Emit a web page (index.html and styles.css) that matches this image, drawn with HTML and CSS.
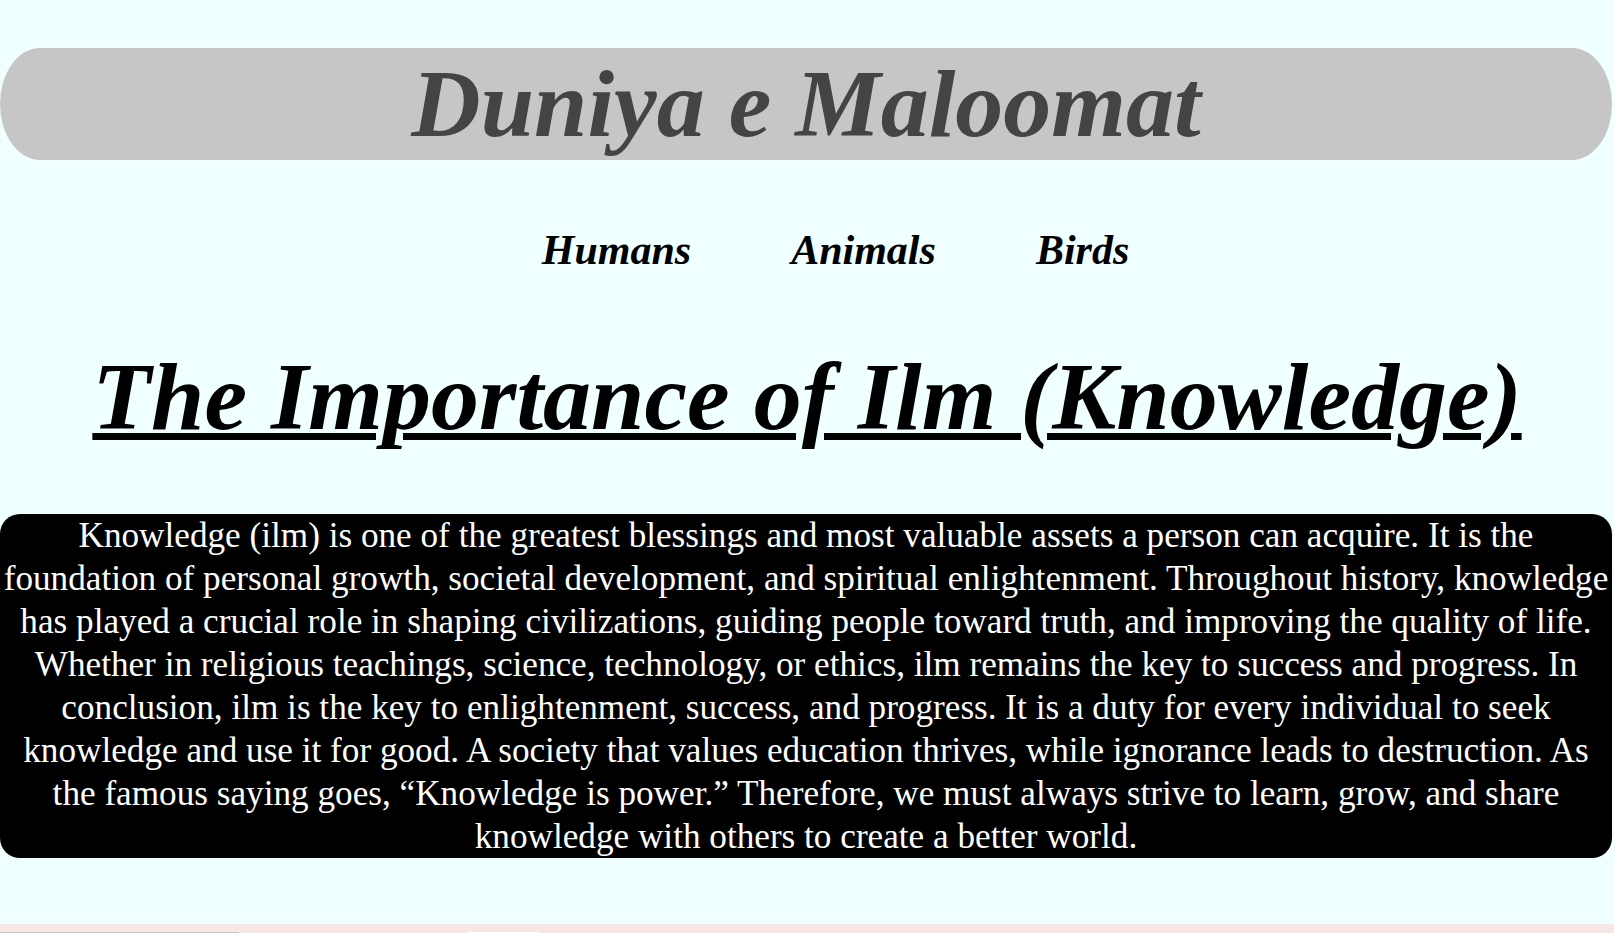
FILE: index.html
```html
<!DOCTYPE html>
<html lang="en">
<head>
<meta charset="utf-8">
<title>Duniya e Maloomat</title>
<link rel="stylesheet" href="styles.css">
</head>
<body>
<header class="site-header">
  <h1 class="site-title">Duniya e Maloomat</h1>
</header>
<nav class="main-nav">
  <a class="nav-link" href="#">Humans</a>
  <a class="nav-link" href="#">Animals</a>
  <a class="nav-link" href="#">Birds</a>
</nav>
<h2 class="page-title">The Importance of Ilm (Knowledge)</h2>
<p class="intro">Knowledge (ilm) is one of the greatest blessings and most valuable assets a person can acquire. It is the foundation of personal growth, societal development, and spiritual enlightenment. Throughout history, knowledge has played a crucial role in shaping civilizations, guiding people toward truth, and improving the quality of life. Whether in religious teachings, science, technology, or ethics, ilm remains the key to success and progress. In conclusion, ilm is the key to enlightenment, success, and progress. It is a duty for every individual to seek knowledge and use it for good. A society that values education thrives, while ignorance leads to destruction. As the famous saying goes, “Knowledge is power.” Therefore, we must always strive to learn, grow, and share knowledge with others to create a better world.</p>
<footer class="next-section">
  <div class="strip-block strip-gray"></div>
  <div class="strip-block strip-white"></div>
</footer>
</body>
</html>
```
FILE: styles.css
```css
html, body {
  margin: 0;
  padding: 0;
}
body {
  background: #f0ffff;
  font-family: "Liberation Serif", "Times New Roman", serif;
  color: #000;
}
.site-header {
  margin: 48px 2px 0 0;
  height: 112px;
  background: #c6c6c6;
  border-radius: 40px / 56px;
}
.site-title {
  margin: 0;
  font-size: 96px;
  line-height: 112px;
  font-weight: bold;
  font-style: italic;
  color: #444444;
  text-align: center;
}
.main-nav {
  margin-top: 66px;
  display: flex;
  justify-content: center;
  gap: 100px;
  padding-left: 57px;
}
.nav-link {
  font-size: 42px;
  font-weight: bold;
  font-style: italic;
  color: #000;
  text-decoration: none;
}
.page-title {
  margin: 67px 0 0 0;
  font-size: 96px;
  font-weight: bold;
  font-style: italic;
  text-align: center;
  text-decoration: underline;
  text-decoration-thickness: 7px;
}
.intro {
  margin: 62px 2px 0 0;
  background: #000;
  color: #fff;
  font-size: 35.2px;
  line-height: 43px;
  text-align: center;
  border-radius: 20px;
  padding: 0;
}
.next-section {
  margin-top: 66px;
  background: #f8e6e6;
  height: 40px;
  padding-top: 8px;
  display: flex;
  align-items: flex-start;
}
.strip-block {
  height: 30px;
}
.strip-gray {
  width: 239px;
  background: #c8c8c8;
}
.strip-white {
  width: 72px;
  margin-left: 227px;
  background: #ffffff;
}
```
